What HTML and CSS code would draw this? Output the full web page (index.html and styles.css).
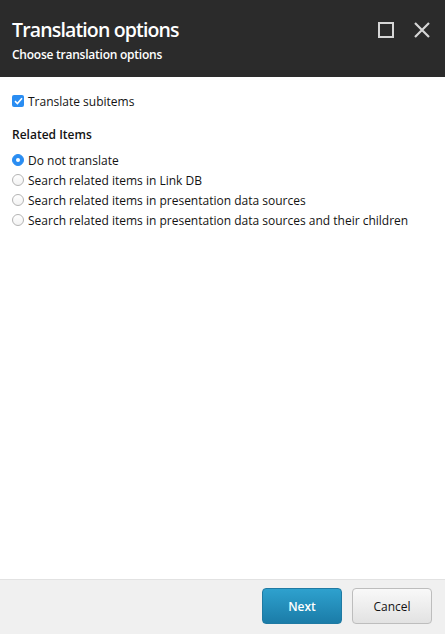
FILE: index.html
```html
<!DOCTYPE html>
<html>
<head>
<meta charset="utf-8">
<link rel="stylesheet" href="styles.css">
</head>
<body>
<div class="dialog">
  <div class="header">
    <div class="titles">
      <div class="title">Translation options</div>
      <div class="subtitle">Choose translation options</div>
    </div>
    <div class="controls">
      <svg class="ctl" width="16" height="16" viewBox="0 0 16 16"><rect x="1" y="1" width="14" height="14" fill="none" stroke="#d6d6d6" stroke-width="2"/></svg>
      <svg class="ctl" width="16" height="16" viewBox="0 0 16 16"><path d="M1 1 L15 15 M15 1 L1 15" stroke="#d6d6d6" stroke-width="2.2" fill="none"/></svg>
    </div>
  </div>
  <div class="content">
    <label class="row check-row"><span class="checkbox"><svg width="9" height="8" viewBox="0 0 9 8"><path d="M1 4.2 L3.4 6.5 L8 1.2" stroke="#fff" stroke-width="1.6" fill="none"/></svg></span>Translate subitems</label>
    <div class="section">Related Items</div>
    <div class="radios">
      <label class="row"><span class="radio on"></span>Do not translate</label>
      <label class="row"><span class="radio"></span>Search related items in Link DB</label>
      <label class="row"><span class="radio"></span>Search related items in presentation data sources</label>
      <label class="row"><span class="radio"></span>Search related items in presentation data sources and their children</label>
    </div>
  </div>
  <div class="footer">
    <button class="btn primary">Next</button>
    <button class="btn secondary">Cancel</button>
  </div>
</div>
</body>
</html>
```
FILE: styles.css
```css
html, body { margin: 0; padding: 0; }
body { font-family: "Open Sans", sans-serif; color: #131313; background: #fff; }
.dialog { width: 445px; height: 634px; display: flex; flex-direction: column; }
.header { height: 77px; flex: none; background: #2b2b2b; display: flex; justify-content: space-between; padding: 0 15px 0 12px; box-sizing: border-box; }
.titles { padding-top: 17px; }
.title { color: #fff; font-size: 19.5px; font-weight: 600; letter-spacing: -0.85px; line-height: 26px; }
.subtitle { color: #fff; font-size: 12px; font-weight: 600; letter-spacing: -0.24px; line-height: 16px; margin-top: 4px; }
.controls { display: flex; gap: 20px; padding-top: 22px; }
.content { flex: 1; padding: 14px 12px 0 12px; font-size: 12px; }
.row { display: flex; align-items: center; height: 20px; }
.checkbox { width: 12px; height: 12px; border-radius: 2px; background: #2a8df2; display: flex; align-items: center; justify-content: center; margin-right: 4px; }
.section { font-weight: 600; margin-top: 16px; line-height: 16px; }
.radios { margin-top: 7px; }
.radio { width: 12px; height: 12px; border-radius: 50%; border: 1px solid #b4b4b4; box-sizing: border-box; margin-right: 4px; background: linear-gradient(#fff, #f2f2f2); }
.radio.on { background: #2a8df2; border-color: #2a8df2; display: flex; align-items: center; justify-content: center; }
.radio.on::after { content: ""; width: 4px; height: 4px; border-radius: 50%; background: #fff; }
.footer { height: 55px; flex: none; box-sizing: border-box; border-top: 1px solid #e2e2e2; background: #f0f0f0; display: flex; justify-content: flex-end; align-items: flex-start; padding: 8px 13px 0 0; gap: 10px; }
.btn { width: 80px; height: 36px; border-radius: 4px; font-family: "Open Sans", sans-serif; font-size: 12px; }
.primary { background: linear-gradient(#2ea1ce, #1b7ca8); border: 1px solid #1f7aa3; color: #fff; font-weight: 600; }
.secondary { background: linear-gradient(#f9f9f9, #e2e2e2); border: 1px solid #bdbdbd; color: #131313; }
```
